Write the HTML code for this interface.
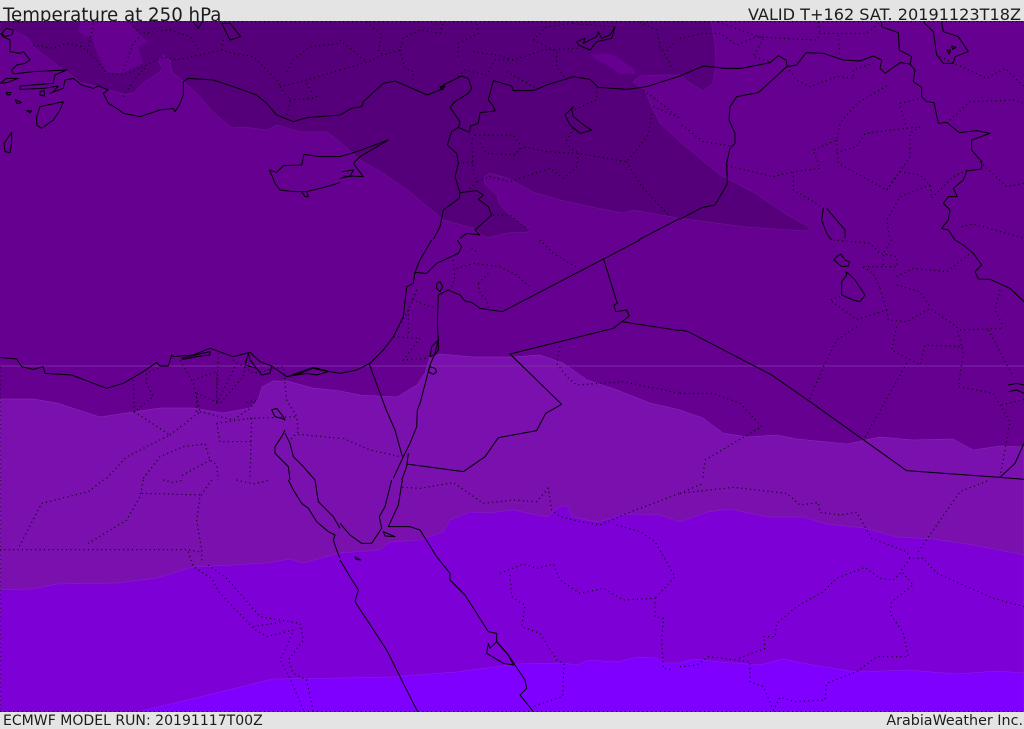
<!DOCTYPE html>
<html><head><meta charset="utf-8"><style>
html,body{margin:0;padding:0;background:#e4e4e4;width:1024px;height:729px;overflow:hidden}
.t{position:absolute;font-family:"DejaVu Sans","Liberation Sans",sans-serif;color:#1c1c1c;white-space:nowrap;line-height:1}
svg{position:absolute;left:0;top:21px}
.s polyline,.s polygon{fill:none;stroke:#000;stroke-width:1;vector-effect:non-scaling-stroke;stroke-linejoin:round}
.d polyline{fill:none;stroke:#000;stroke-width:1.2;stroke-dasharray:1 3.4;vector-effect:non-scaling-stroke;opacity:.95}
</style></head><body>
<div class="t" style="left:3px;top:7px;font-size:18.2px">Temperature at 250 hPa</div>
<div class="t" style="right:3px;top:7px;font-size:16.1px">VALID T+162 SAT. 20191123T18Z</div>
<div class="t" style="left:3px;top:714px;font-size:14.05px">ECMWF MODEL RUN: 20191117T00Z</div>
<div class="t" style="right:1px;top:714px;font-size:14.3px">ArabiaWeather Inc.</div>
<svg width="1024" height="691" viewBox="0 21 1024 691">
<rect x="0" y="21" width="1024" height="691" fill="#660091"/>
<polygon fill="#55007a" stroke="#6c1a90" stroke-width=".5" points="0,21 0,33 10,27.5 17,32 28,38 35,48 50,60 67,72 80,82 100,87 123,94 133,93 143,83 160,72 162,68 158,60 163,55 170,60 172,72 182,80 200,97 213,112 232,128 243,127 267,130 277,125 300,132 327,132 340,141.7 360,160 383,173 410,192 440,217 443,220 473,228 487,238 507,233 528,232 528,228 507,213 499,203 497,195 485,185 484,177 490,173 507,178 533,192 560,200 597,208 623,213 633,210 680,218.3 747,227 807,231 811,228 787,215 753,192 720,175 680,142 660,123 650,103 645,90 633,82 640,76 660,75 680,75 690,83 703,91 713,83 716,63 715,43 711,21"/>
<polygon fill="#660091" points="80,21 78,32 92,38 97,53 107,73 123,73 143,63 138,47 148,42 127,21"/>
<polygon fill="#660091" points="592,55 607,53 617,57 635,70 635,74 620,74 607,65 593,58"/>
<polygon fill="#7a10ae" stroke="#8a30b8" stroke-width=".5" points="0,399 33,399 57,403 100,417 113,415 133,412 160,408 193,408 223,413 250,408 258,400 262,387 273,381 287,381 313,388 340,391 360,395 397,397 417,385 425,373 430,357 440,354 473,357 513,357 540,355 563,363 587,380 617,390 650,403 680,410 703,418 723,433 747,437 777,435 797,439 847,444 880,437 913,440 953,439 973,450 1000,446 1024,447 1024,712 0,712"/>
<polygon fill="#7d00d6" stroke="#8a20d0" stroke-width=".5" points="0,590 33,589 57,584 117,583 157,578 193,567 233,565 267,563 290,559 303,563 340,553 380,550 390,542 420,540 443,532 450,520 470,512 490,513 513,510 547,517 557,508 567,505 572,517 597,522 627,514 660,515 680,522 707,512 730,509 767,517 803,517 827,524 863,528 897,537 933,539 973,545 1024,555 1024,712 0,712"/>
<polygon fill="#7f00ff" stroke="#8a20e8" stroke-width=".5" points="137,712 200,697 273,679 340,678 390,677 457,672 517,664 563,663 577,665 588,660 617,662 637,657 657,658 663,663 680,663 693,659 720,662 760,665 783,659 813,665 857,672 907,670 957,674 997,671 1024,673 1024,712"/>
<line x1="0" y1="366" x2="1024" y2="366" stroke="#7c2ca6" stroke-width="1"/>

<g class="d">
<polyline points="0,21.5 1024,21.5"/><polyline points="0,711.5 1024,711.5"/>
<g transform="scale(.33333)">
<polyline points="40,66 80,66"/>
<polyline points="100,135 160,145 200,130 245,140 290,180 320,220 370,225 440,195 490,170 530,180 600,165 665,150 700,160 760,170 830,240 840,260"/>
<polyline points="280,70 275,100 260,160"/><polyline points="370,210 400,130 420,110"/>
<polyline points="400,80 420,100 510,90 570,110 600,155"/><polyline points="670,120 665,150"/>
<polyline points="860,215 880,180 930,140 1020,130"/><polyline points="840,260 920,240 1020,210"/>
<polyline points="840,260 870,300 860,350"/><polyline points="870,300 940,295 960,285"/><polyline points="920,250 940,285"/>
<polyline points="370,290 410,230 440,200"/>
</g>
<g transform="translate(340,0) scale(.33333)">
<polyline points="0,120 60,170 80,185"/><polyline points="0,210 70,190 130,165 180,150 190,115 240,90 300,100 310,66"/>
<polyline points="80,66 125,105 115,150 130,165"/><polyline points="180,150 195,205 220,215 218,250"/>
<polyline points="355,230 375,210 440,225 465,180 520,180 610,150 715,145"/><polyline points="400,155 470,165 520,180"/>
<polyline points="355,170 355,130 415,100 410,66"/><polyline points="580,120 620,80 700,70"/><polyline points="580,120 610,135 650,155"/>
<polyline points="650,155 650,200 680,240"/><polyline points="700,70 820,80"/><polyline points="900,66 950,90 960,140 1000,210"/><polyline points="1000,130 975,160"/>
<polyline points="500,215 590,265"/><polyline points="770,262 770,300 700,330"/>
<polyline points="405,405 395,420 400,520 410,545 380,575"/>
<polyline points="420,430 440,460 520,465 550,440 620,455 715,460 860,485 925,405 935,340"/>
<polyline points="405,405 520,405 545,440"/><polyline points="540,445 520,470"/>
<polyline points="715,460 710,500 670,535 630,505 510,545 450,530 410,545"/>
<polyline points="860,485 905,560 990,650"/><polyline points="700,385 675,430 715,460"/><polyline points="355,490 400,487"/>
<polyline points="460,645 510,645 565,690"/><polyline points="910,270 1020,355"/><polyline points="940,320 1020,355"/>
</g>
<g transform="translate(680,0) scale(.33333)">
<polyline points="0,115 70,100 120,100 170,135 230,110 300,115 410,120 420,100 560,100 600,66"/>
<polyline points="115,66 250,115 220,170 270,185"/><polyline points="415,66 420,100"/><polyline points="475,105 480,170"/>
<polyline points="320,200 350,240 390,260 470,230 520,235 520,210 580,190"/>
<polyline points="620,258 530,310 480,370 470,420 400,450 420,505 340,515 340,570 400,605 430,625"/>
<polyline points="140,497 280,530 340,515"/><polyline points="5,375 70,425 150,437"/>
<polyline points="470,420 475,490 620,570 660,515 720,525 750,555 755,595 820,530 860,510"/>
<polyline points="620,570 690,470 690,400 720,380 555,400 530,440 460,460"/>
<polyline points="660,310 720,295"/><polyline points="660,320 680,385"/>
<polyline points="750,555 660,590 620,660 630,720"/>
<polyline points="810,360 870,305 1000,300 1032,310"/><polyline points="900,485 980,560 1032,550"/>
<polyline points="780,170 920,235 975,205 1032,260"/><polyline points="845,680 880,672 1032,715"/>
</g>
<g transform="translate(0,240) scale(.33333)">
<polyline points="0,380 0,720"/>
<polyline points="400,420 403,515 460,470 440,430 440,400 480,382"/><polyline points="403,515 510,585"/>
<polyline points="510,585 600,515 580,430 540,360"/><polyline points="320,715 380,650 510,585"/>
<polyline points="590,460 660,490 730,410 740,360"/><polyline points="580,420 650,395 650,490 655,340"/>
<polyline points="590,515 590,460"/><polyline points="650,490 670,450 710,370"/>
<polyline points="700,360 760,400 850,380 860,480 890,530 895,575 870,600"/>
<polyline points="600,515 700,540 750,505 770,480 730,490"/><polyline points="750,535 890,530"/>
<polyline points="650,550 660,605 755,605"/><polyline points="650,550 750,535"/><polyline points="755,535 750,720"/>
<polyline points="430,715 480,650 550,620 615,612 630,660 650,675 655,720"/><polyline points="630,660 540,710"/>
<polyline points="895,583 1020,595"/>
</g>
<g transform="translate(340,240) scale(.33333)">
<polyline points="10,595 90,630 180,650"/><polyline points="340,60 345,110 335,140"/>
<polyline points="350,85 400,70 480,80 530,105 575,145"/><polyline points="415,130 445,100"/>
<polyline points="415,130 420,160 440,180 445,205"/><polyline points="395,25 410,35"/>
<polyline points="600,0 640,40 715,85"/><polyline points="230,150 205,210 160,290 240,295 190,360 260,355"/>
<polyline points="215,180 290,205"/><polyline points="205,210 205,290"/>
<polyline points="660,320 650,370 680,410 710,435 850,425 1020,460"/><polyline points="130,330 90,370"/>
</g>
<g transform="translate(680,240) scale(.33333)">
<polyline points="0,460 100,460 180,490 245,560 75,660 68,720"/>
<polyline points="460,0 570,10 600,40 650,50 650,80 545,80 580,100 600,145"/><polyline points="635,0 610,40 610,80"/>
<polyline points="650,110 700,85 800,95 870,40"/><polyline points="650,135 720,155 750,200"/>
<polyline points="600,145 620,210 530,238 450,180 480,170"/>
<polyline points="620,210 625,240 680,245 750,205 830,260 850,340 835,440 940,460 990,545 960,712"/>
<polyline points="530,260 470,300 435,370 385,485"/><polyline points="650,260 635,330 720,375 735,315 850,320"/>
<polyline points="680,370 550,600"/><polyline points="840,270 970,265"/><polyline points="925,270 1000,410"/>
<polyline points="960,150 945,210 970,260"/><polyline points="965,495 1032,478"/>
</g>
<g transform="translate(0,480) scale(.33333)">
<polyline points="310,0 265,35 125,70 55,205"/><polyline points="430,0 420,50 380,120 265,190"/><polyline points="425,40 610,45"/>
<polyline points="635,0 600,50 590,120 605,210 605,250"/><polyline points="0,209 565,209 605,217"/>
<polyline points="565,215 580,260 635,295 660,340 760,445 800,470 880,450 860,500 840,540 870,595 910,690"/>
<polyline points="625,255 680,295 780,410 900,430 910,480 865,540 880,580 920,600 940,695"/>
<polyline points="490,0 520,8 550,0"/><polyline points="710,0 760,12 810,0"/><polyline points="0,0 0,690"/><polyline points="760,440 850,425"/>
</g>
<g transform="translate(340,480) scale(.33333)">
<polyline points="187,22 240,25 340,8 430,70 520,60 590,65 625,25 635,90 660,110 720,125 780,135 860,100 1020,40"/>
<polyline points="830,135 900,155 945,185 1005,290 945,355"/>
<polyline points="480,280 550,252 590,265 640,252 660,300 720,340 790,325 850,360 945,355 945,410 970,415 965,480 970,565 1000,570"/>
<polyline points="510,285 515,350 555,375 545,440 600,460 650,540 672,550 668,650 575,680"/>
</g>
<g transform="translate(680,480) scale(.33333)">
<polyline points="0,40 65,12"/>
<polyline points="0,40 160,22 320,40 360,75 415,68 420,97 480,105 530,97 575,175 680,215 690,235 730,235 770,280 940,355 1032,380"/>
<polyline points="0,560 50,555 85,530 210,545 210,605 250,620 280,690 300,652 345,665 435,660 440,610 530,575 590,530 685,530 670,460 630,400 635,365 700,315 665,275 640,300 600,295 555,262 470,295 430,335 350,380 290,430 285,470 250,470 255,505 170,537"/>
<polyline points="715,215 760,150 840,35 930,0"/><polyline points="665,270 690,235"/>
</g>
</g>

<g class="s">
<g transform="scale(.33333)">
<polyline points="0,100 10,110 30,120 30,155 60,160 70,155 90,180 75,190 50,195 35,210 40,222 100,215 200,210 165,225 160,250 60,258 60,268 130,265 175,258 160,275 150,280 190,265 195,240 220,235 245,255 280,265 295,258 325,270 310,280 325,310 350,325 370,340 395,345 420,350 480,330 520,325 525,335 538,315 550,285 550,245 565,235 640,240 700,260 770,285 800,310 830,345 880,365 920,353 1020,345"/>
<polygon points="110,350 120,320 190,305 180,330 160,360 125,385 110,375"/>
<polygon points="35,397 12,430 15,455 30,458 35,430"/>
<polygon points="0,250 20,235 55,235 20,248"/>
<polygon points="20,277 32,278 30,285 20,284"/><polygon points="45,298 65,308 50,310"/><polygon points="80,332 95,333 90,338"/><polygon points="120,275 133,272 133,288 120,285"/>
<polygon points="665,70 690,70 722,110 690,120 680,100"/>
<polyline points="580,66 595,85 607,66"/>
<polygon points="5,100 20,85 40,90 35,105 15,110"/>
<polyline points="808,510 830,517 850,497 905,495 912,463 960,470 1020,470"/>
<polyline points="1020,548 980,560 920,575 880,575 840,570 825,550 815,525 808,510"/>
<polyline points="905,575 915,590 925,590 920,575"/>
</g>
<g transform="translate(340,0) scale(.33333)">
<polyline points="0,345 35,325 65,320 70,305 130,250 165,243 200,258 262,285 300,270 310,255 365,228 385,235 395,265 385,280 345,305 330,322 360,365 355,382 388,397 392,378 415,370 420,338 465,333 460,318 445,300 460,242 515,258 520,272 580,272 620,255 700,230 750,238 775,262 860,268 920,260 1020,228"/>
<polyline points="355,382 335,395 322,435 350,460 355,490 345,530 360,578 410,572 430,585 415,598 445,620 455,645 405,690 420,705 380,700 360,715"/>
<polyline points="360,578 358,595 310,630 300,680 280,718"/>
<polygon points="300,260 315,258 305,270"/>
<polygon points="710,125 735,115 730,130 770,110 775,95 785,115 810,105 825,80 815,115 770,125 750,150 715,135"/>
<polygon points="700,320 675,345 690,375 720,400 755,390 735,378 700,350 695,330"/>
<polyline points="895,720 1020,655"/>
<polyline points="0,470 50,455 145,420 60,470 40,490 70,530 30,528 0,535"/>
<polyline points="5,515 40,510 30,530 10,528"/>
</g>
<g transform="translate(680,0) scale(.33333)">
<polyline points="0,228 30,215 70,198 135,205 185,205 270,188 295,167 318,180 322,200 350,195 378,158 430,160 490,180 540,183 580,168 605,180 600,205 615,220 660,188 690,192 705,210 700,245 725,262 725,290 740,305 762,308 775,370 800,367 838,398 890,392 930,400 875,420 875,450 905,485 905,507 860,513 850,540 820,565 832,590 805,590 790,610 810,630 805,660 785,685 805,690 825,720"/>
<polyline points="605,66 605,80 655,98 658,150 695,170 690,195"/>
<polyline points="320,200 235,278 170,290 150,320 147,360 165,400 165,430 150,445 140,490 142,552 105,615 65,623 0,658"/>
<polyline points="730,66 760,95 770,165 790,190 820,190 825,170 865,155 835,110 790,95 785,66"/>
<polyline points="430,625 425,660 440,700 455,720"/><polyline points="440,625 495,690 495,715"/>
<polygon points="800,150 812,150 808,162"/><polygon points="815,138 828,142 818,148"/>
</g>
<g transform="translate(0,240) scale(.33333)">
<polyline points="0,352 50,357 65,380 100,388 130,380 135,400 215,405 280,430 320,445 370,430 430,395 470,367 480,378 505,378 515,345 520,350 580,345 630,325 700,350 750,337 780,365 815,378 860,410 940,382 990,395 1020,400"/>
<polygon points="545,355 630,335 630,345 590,350 550,358"/>
<polyline points="735,375 745,340 750,360 770,385 785,405 810,400 815,380"/>
<polyline points="735,375 770,385"/>
<polygon points="860,410 900,400 940,385 985,395 950,405 920,400"/>
<polyline points="855,570 845,590 825,620 825,640 865,680 870,720"/>
<polyline points="855,580 870,610 880,650 910,680 945,720"/>
<polygon points="815,510 830,505 850,530 855,540 845,535 825,530"/>
</g>
<g transform="translate(340,240) scale(.33333)">
<polyline points="0,400 50,390 90,370 130,330 160,290 190,230 200,140 220,130 225,97 260,100 290,70 355,40 365,20 352,0"/>
<polyline points="275,0 240,60 225,97"/>
<polygon points="290,130 300,125 308,140 300,155 290,145"/>
<polyline points="295,165 325,150 360,165 375,183 395,187 420,205 487,215 900,0"/>
<polyline points="295,165 292,250 295,300 285,340 270,375 265,395 240,490 232,510 230,560 210,610 190,650"/>
<polygon points="275,320 295,300 295,330 285,345 270,350"/>
<polygon points="270,380 265,395 280,403 290,395 285,385"/>
<polyline points="87,370 135,500 140,513 165,570 187,650"/>
<polyline points="790,55 832,190 822,195 827,215 860,210 868,228 820,265 510,342 665,493 617,520 590,572 475,593 435,650 370,695 200,672"/>
<polyline points="845,245 1020,272"/>
<polyline points="190,650 160,715"/><polyline points="205,640 200,680 185,720"/>
</g>
<g transform="translate(680,240) scale(.33333)">
<polyline points="0,270 25,275 275,405 390,485 680,692 960,712 1032,718"/>
<polyline points="960,712 1005,670 1032,610"/>
<polyline points="825,0 850,15 880,40 905,75 885,95 895,117 930,118 990,145 1032,185"/>
<polygon points="470,50 482,42 495,60 508,65 505,78 485,80 462,60"/>
<polygon points="498,95 500,105 485,125 485,165 520,180 540,185 555,165 525,120 510,105"/>
<polyline points="985,435 1010,430 1032,435"/><polyline points="985,455 1010,450 1032,460"/>
</g>
<g transform="translate(0,480) scale(.33333)">
<polyline points="865,0 880,30 905,70 925,85 950,125 985,155 1005,165 1000,180 1010,210 1020,235"/>
<polyline points="945,0 955,65 1000,110 1020,145"/>
</g>
<g transform="translate(340,480) scale(.33333)">
<polyline points="155,0 135,80 118,110 125,145 95,190 65,190 30,165 0,130"/>
<polyline points="187,0 175,75 145,140 160,140 210,140 240,150 290,230 330,280 330,300 375,345 445,455 470,460 470,485 505,525 525,555 555,600 560,625 540,645 580,695"/>
<polyline points="0,240 30,290 55,330 45,365 140,510 210,650 233,695"/>
<polygon points="445,490 440,520 490,550 520,555 505,525 470,485 450,505"/>
<polygon points="130,155 165,170 135,168"/><polygon points="45,230 62,240 48,238"/>
</g>
</g>
</svg>
</body></html>
